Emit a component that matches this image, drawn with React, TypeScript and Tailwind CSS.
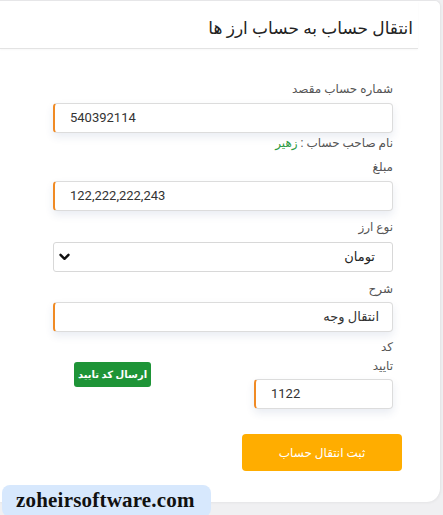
import React from "react";

const fa = { fontFamily: 'Roboto, "DejaVu Sans", sans-serif' };

function Field({ value, ltr, accent = true, className = "" }: { value: string; ltr?: boolean; accent?: boolean; className?: string }) {
  return (
    <div
      className={`h-[30px] bg-white rounded-[4px] border border-[#dcdcdc] flex items-center shadow-[0_4px_8px_rgba(40,70,130,0.10)] text-[13px] text-[#333] ${accent ? "border-l-2 border-l-[#f08a24]" : ""} ${className}`}
      dir={ltr ? "ltr" : "rtl"}
      style={fa}
    >
      <span className={ltr ? "pl-[15px]" : "pr-[13px]"}>{value}</span>
    </div>
  );
}

export default function App() {
  return (
    <div className="w-[443px] h-[515px] bg-[#f0f0f2] relative overflow-hidden" style={fa}>
      <div className="w-[441px] h-[502px] bg-white rounded-tr-[6px] rounded-br-[14px] border-r border-t border-[#e6e6e8] shadow-[0_1px_3px_rgba(0,0,0,0.05)]">
        <div className="w-[418px] h-[48px] border-b border-[#e3e3e3] shadow-[0_1px_2px_rgba(0,0,0,0.03)] flex items-center justify-end pr-[5px] pt-[8px]">
          <div className="text-[17px] text-[#222]" dir="rtl" style={fa}>انتقال حساب به حساب ارز ها</div>
        </div>
        <div className="ml-[53px] w-[340px]" dir="rtl">
          <div className="mt-[30px] h-[20px] leading-[20px] text-[12px] text-[#555]">شماره حساب مقصد</div>
          <Field className="mt-[4px]" value="540392114" ltr />
          <div className="h-[20px] leading-[20px] text-[12px] text-[#555]">
            نام صاحب حساب : <span className="text-[#2e9b45]">زهیر</span>
          </div>
          <div className="mt-[4px] h-[20px] leading-[20px] text-[12px] text-[#555]">مبلغ</div>
          <Field className="mt-[4px]" value="122,222,222,243" ltr />
          <div className="mt-[6px] h-[20px] leading-[20px] text-[12px] text-[#555]">نوع ارز</div>
          <div className="mt-[5px] h-[30px] bg-white rounded-[3px] border border-[#d8d8d8] flex items-center justify-between text-[13px] text-[#222]">
            <span className="pr-[17px]">تومان</span>
            <svg width="11" height="8" viewBox="0 0 11 8" className="ml-[5px]">
              <path d="M1.5 1.8 L5.5 5.8 L9.5 1.8" stroke="#111" strokeWidth="2.4" fill="none" strokeLinecap="round" strokeLinejoin="round" />
            </svg>
          </div>
          <div className="mt-[7px] h-[20px] leading-[20px] text-[12px] text-[#555]">شرح</div>
          <Field className="mt-[3px]" value="انتقال وجه" />
          <div className="mt-[6px] flex justify-between items-start">
            <div className="w-[139px]">
              <div className="h-[19px] leading-[19px] text-[12px] text-[#555]">کد</div>
              <div className="h-[19px] leading-[19px] text-[12px] text-[#555]">تایید</div>
              <Field className="mt-[3px]" value="1122" ltr />
            </div>
            <button className="mt-[24px] ml-[21px] w-[77px] h-[25px] bg-[#1e9437] rounded-[3px] text-white text-[10px] font-bold flex items-center justify-center whitespace-nowrap" style={fa}>
              ارسال کد تایید
            </button>
          </div>
        </div>
        <div className="ml-[242px] mt-[25px] w-[160px] h-[37px] bg-[#ffad00] rounded-[4px] flex items-center justify-center text-white text-[12px] tracking-[0.5px]" dir="rtl">
          ثبت انتقال حساب
        </div>
      </div>
      <div className="absolute left-[2px] top-[485px] w-[209px] h-[32px] bg-[#d7e8fd] rounded-[8px] flex items-center pl-[14px] text-[21px] font-bold text-[#111] tracking-[0.2px]" style={{ fontFamily: '"Liberation Serif", serif' }}>
        zoheirsoftware.com
      </div>
    </div>
  );
}
